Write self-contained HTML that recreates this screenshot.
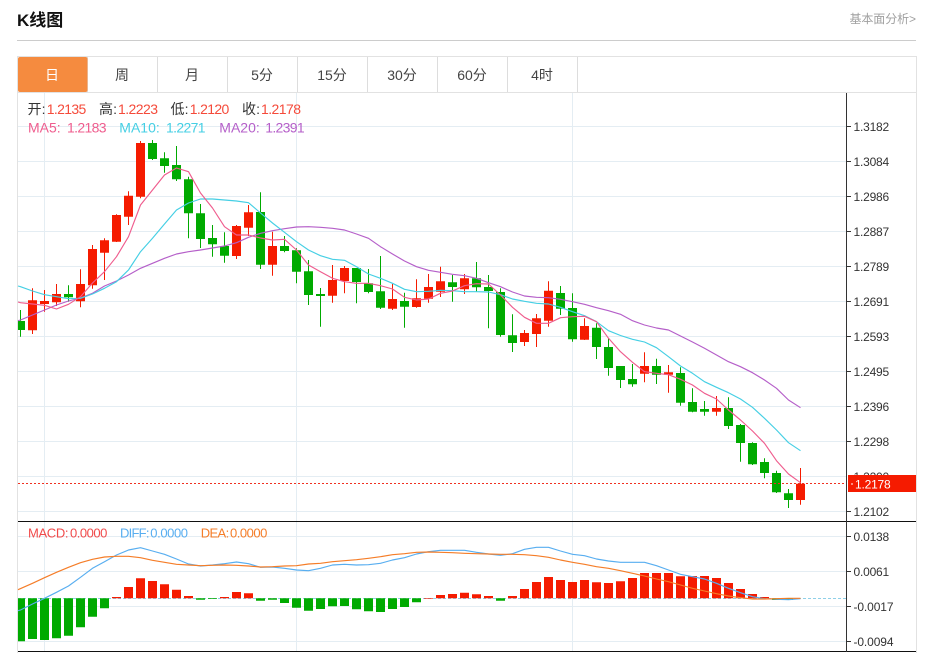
<!DOCTYPE html>
<html lang="zh-CN"><head><meta charset="utf-8"><title>K线图</title>
<style>
html,body{margin:0;padding:0;background:#fff;width:929px;height:653px;overflow:hidden}
svg{display:block;font-family:"Liberation Sans","Noto Sans CJK SC",sans-serif}
</style></head><body>
<svg width="929" height="653" viewBox="0 0 929 653" xmlns="http://www.w3.org/2000/svg">
<rect width="929" height="653" fill="#fff"/>
<text x="17" y="26" font-size="17" font-weight="700" fill="#111">K线图</text>
<text x="849.5" y="23" font-size="12" fill="#a0a0a0" textLength="66.5">基本面分析&gt;</text>
<path d="M17 40.5H916" stroke="#ccc"/>
<path d="M17.5 653V56.5H916.5V653M17 92.5H917" fill="none" stroke="#e2e2e2"/>
<path d="M87.5 57V92M157.5 57V92M227.5 57V92M297.5 57V92M367.5 57V92M437.5 57V92M507.5 57V92M577.5 57V92" stroke="#ddd"/>
<rect x="18" y="57" width="69.5" height="35" rx="2" fill="#f58b3f"/>
<g font-size="14" fill="#444" text-anchor="middle">
<text x="52" y="80" fill="#fff">日</text><text x="122" y="80">周</text><text x="192" y="80">月</text><text x="262" y="80">5分</text><text x="332" y="80">15分</text><text x="402" y="80">30分</text><text x="472" y="80">60分</text><text x="542" y="80">4时</text>
</g>
<path d="M18 126.5H846M18 161.5H846M18 196.5H846M18 231.5H846M18 266.5H846M18 301.5H846M18 336.5H846M18 371.5H846M18 406.5H846M18 441.5H846M18 476.5H846M18 511.5H846M18 536.5H846M18 571.5H846M18 606.5H846M18 641.5H846M44.5 93V651M296.5 93V651M572.5 93V651" stroke="#e4edf3" fill="none"/>
<path d="M20.5 310V336.7M68.5 285.3V301.7M152.5 140V160M164.5 152.3V172.7M176.5 146V181M188.5 176.7V238.3M200.5 204V248M212.5 225V256.7M224.5 232.3V262.7M260.5 192.3V269M284.5 236V252.3M296.5 248.3V283.3M308.5 260V305M320.5 288V326.7M356.5 268V303.3M368.5 269V293.3M380.5 256V309M404.5 292.7V327.7M452.5 275V301.7M476.5 262V291.7M488.5 275V328.3M500.5 288.3V336.7M512.5 314.3V352M560.5 286V315M572.5 293.3V341.7M596.5 323.3V359M608.5 338.3V375.7M620.5 366V388M632.5 364V386.7M656.5 358.7V384M680.5 367.3V405.7M692.5 388.3V412.3M704.5 401V415.7M728.5 397.3V429M740.5 424V461.7M752.5 442.3V465M764.5 458.3V478.3M776.5 470.7V493M788.5 489V508" stroke="#00aa00" fill="none"/>
<path d="M32.5 288.3V334M44.5 290V311.7M56.5 284V306M80.5 269.3V307.3M92.5 245V288.7M104.5 238.3V280M116.5 214.3V242M128.5 191.3V225M140.5 141V198.3M236.5 225V259M248.5 205V236M272.5 231.7V275.7M332.5 265V302.7M344.5 266V293.3M392.5 284V310M416.5 279.3V307.7M428.5 274V302.7M440.5 266.7V297M464.5 274V294M524.5 330V346M536.5 314V347M548.5 281.3V326.7M584.5 318.3V340M644.5 352.3V382.3M668.5 365V392.7M716.5 396V415.7M800.5 468V504.7" stroke="#f51b00" fill="none"/>
<path d="M18 321h7V330h-7zM64 294h9V297.3h-9zM148 143h9V159h-9zM160 158.3h9V166h-9zM172 165h9V179.3h-9zM184 179.3h9V213.3h-9zM196 213.3h9V239h-9zM208 238h9V244.3h-9zM220 246h9V255.7h-9zM256 212h9V264.7h-9zM280 246h9V251h-9zM292 250.3h9V271.7h-9zM304 271.3h9V295h-9zM316 294h9V296h-9zM352 268h9V282h-9zM364 283.3h9V292h-9zM376 291.3h9V307.7h-9zM400 301h9V306.7h-9zM448 282.3h9V287h-9zM472 278.3h9V287.3h-9zM484 287h9V291h-9zM496 292h9V335h-9zM508 335.3h9V343h-9zM556 293h9V308.7h-9zM568 308h9V339.3h-9zM592 327.7h9V347h-9zM604 347h9V368h-9zM616 366h9V380h-9zM628 379h9V384.3h-9zM652 366h9V374.7h-9zM676 373h9V402.7h-9zM688 402h9V411.7h-9zM700 409h9V411.7h-9zM724 408h9V426h-9zM736 425h9V443h-9zM748 443h9V464.3h-9zM760 462h9V473h-9zM772 473h9V492.3h-9zM784 493.3h9V500h-9z" fill="#00aa00"/>
<path d="M28 300.3h9V330.3h-9zM40 301h9V304h-9zM52 294h9V302.3h-9zM76 284h9V301.3h-9zM88 249h9V285.3h-9zM100 240.3h9V252.7h-9zM112 215h9V241.7h-9zM124 195.7h9V216.7h-9zM136 143h9V196.7h-9zM232 226h9V256h-9zM244 212.3h9V227.7h-9zM268 246h9V264.7h-9zM328 280h9V295.7h-9zM340 268h9V281h-9zM388 299h9V308.7h-9zM412 298.3h9V307h-9zM424 287h9V298.7h-9zM436 281.3h9V291.7h-9zM460 278.3h9V289.3h-9zM520 333h9V342h-9zM532 318.3h9V334h-9zM544 290.7h9V320.7h-9zM580 326h9V339.7h-9zM640 366h9V373.7h-9zM664 372.3h9V374.7h-9zM712 408h9V411.7h-9zM796 483.7h9V500h-9z" fill="#f51b00"/>
<g fill="none" stroke-width="1.15" stroke-linejoin="round">
<polyline stroke="#b55fc9" points="18,320.7 20.5,320 32.5,315 44.5,310 56.5,305 68.5,301 80.5,298 92.5,293.3 104.5,286 116.5,281 128.5,275 140.5,268.3 152.5,263.3 164.5,258.3 176.5,254 188.5,251.7 200.5,250 212.5,248 224.5,246 236.5,242.7 248.5,237.3 260.5,233.3 272.5,230.7 284.5,228.7 296.5,227 308.5,226.7 320.5,227.3 332.5,228.3 344.5,230 356.5,234 368.5,238.3 380.5,246.7 392.5,254 404.5,261 416.5,266.7 428.5,270.3 440.5,272.3 452.5,274.3 464.5,275.7 476.5,278.3 488.5,282.7 500.5,286.7 512.5,292 524.5,296 536.5,297.3 548.5,297.7 560.5,299.3 572.5,301.7 584.5,304.3 596.5,307.7 608.5,310.7 620.5,314.3 632.5,320.7 644.5,325 656.5,328 668.5,330 680.5,336 692.5,342 704.5,348.3 716.5,355 728.5,361.7 740.5,366.7 752.5,372.7 764.5,380 776.5,388.3 788.5,400 800.5,407.7"/>
<polyline stroke="#45cfe4" points="18,286 20.5,286.7 32.5,291 44.5,294.7 56.5,296.7 68.5,298.7 80.5,298.3 92.5,294 104.5,288.3 116.5,281.7 128.5,270 140.5,251.7 152.5,238.3 164.5,224 176.5,210 188.5,203 200.5,199 212.5,199 224.5,200 236.5,201 248.5,202.7 260.5,213 272.5,223 284.5,232.3 296.5,241.7 308.5,250 320.5,255.7 332.5,259.3 344.5,260.3 356.5,266.7 368.5,274 380.5,278.3 392.5,283.3 404.5,289.3 416.5,291.7 428.5,291.3 440.5,290.3 452.5,290.7 464.5,291.7 476.5,291.7 488.5,292 500.5,294.7 512.5,299 524.5,301.3 536.5,303.3 548.5,304 560.5,307.3 572.5,311.7 584.5,315.7 596.5,321.7 608.5,330.7 620.5,335.5 632.5,339.3 644.5,342 656.5,347.7 668.5,356.7 680.5,366 692.5,373.3 704.5,381.7 716.5,387.3 728.5,392.7 740.5,399 752.5,407.3 764.5,418.3 776.5,430 788.5,442.7 800.5,450.7"/>
<polyline stroke="#ef5d8e" points="18,302 20.5,302.7 32.5,304 44.5,305.3 56.5,309 68.5,304.3 80.5,296.7 92.5,283 104.5,271.7 116.5,256.7 128.5,236.7 140.5,205 152.5,190 164.5,175 176.5,168 188.5,171.7 200.5,193 212.5,208 224.5,226.7 236.5,235 248.5,235 260.5,238 272.5,240 284.5,239.3 296.5,250 308.5,265 320.5,271.7 332.5,278.3 344.5,281.7 356.5,283.3 368.5,283.3 380.5,285.7 392.5,289 404.5,297.3 416.5,300 428.5,299 440.5,293.3 452.5,291 464.5,285.7 476.5,283.7 488.5,284 500.5,295 512.5,307.3 524.5,317.3 536.5,323.3 548.5,323.3 560.5,317.7 572.5,316.7 584.5,316.3 596.5,321.7 608.5,338.3 620.5,351.7 632.5,362.3 644.5,371.7 656.5,373.3 668.5,374.7 680.5,379.3 692.5,385 704.5,393.3 716.5,399 728.5,410 740.5,420 752.5,431 764.5,443.3 776.5,460.7 788.5,474 800.5,482.7"/>
</g>
<path d="M18 483.5H846" stroke="#f03020" stroke-dasharray="2 2"/>
<g font-size="14">
<text x="27.5" y="114" fill="#333" textLength="18">开:</text><text x="46.7" y="114" fill="#f54a3a" textLength="39.6">1.2135</text>
<text x="99" y="114" fill="#333" textLength="18">高:</text><text x="118" y="114" fill="#f54a3a" textLength="40">1.2223</text>
<text x="170.5" y="114" fill="#333" textLength="18">低:</text><text x="189.7" y="114" fill="#f54a3a" textLength="39.6">1.2120</text>
<text x="242" y="114" fill="#333" textLength="18">收:</text><text x="261" y="114" fill="#f54a3a" textLength="40">1.2178</text>
<text x="28" y="132.5" fill="#ef5d8e">MA5:</text><text x="67" y="132.5" fill="#ef5d8e" textLength="39.5">1.2183</text>
<text x="119.3" y="132.5" fill="#45cfe4">MA10:</text><text x="166" y="132.5" fill="#45cfe4" textLength="39.5">1.2271</text>
<text x="219.3" y="132.5" fill="#b55fc9">MA20:</text><text x="265.2" y="132.5" fill="#b55fc9" textLength="39.5">1.2391</text>
</g>
<g font-size="13">
<text x="28" y="537.5" fill="#f14a4a" textLength="40.5">MACD:</text><text x="70" y="537.5" fill="#f14a4a" textLength="37.3">0.0000</text>
<text x="120" y="537.5" fill="#58aef0" textLength="29.5">DIFF:</text><text x="150.3" y="537.5" fill="#58aef0" textLength="37.7">0.0000</text>
<text x="200.7" y="537.5" fill="#f57d28" textLength="28.5">DEA:</text><text x="230" y="537.5" fill="#f57d28" textLength="37.3">0.0000</text>
</g>
<path d="M18 598.5H846" stroke="#8fd0e8" stroke-dasharray="3 2"/>
<path d="M18 598.3h7V641.3h-7zM28 598.3h9V639h-9zM40 598.3h9V640h-9zM52 598.3h9V638.3h-9zM64 598.3h9V635.7h-9zM76 598.3h9V627.3h-9zM88 598.3h9V616.7h-9zM100 598.3h9V608.3h-9zM196 598.3h9V599.7h-9zM208 598.3h9V599h-9zM256 598.3h9V600.7h-9zM268 598.3h9V599.7h-9zM280 598.3h9V603h-9zM292 598.3h9V607.7h-9zM304 598.3h9V610.7h-9zM316 598.3h9V609h-9zM328 598.3h9V606.3h-9zM340 598.3h9V606h-9zM352 598.3h9V609.3h-9zM364 598.3h9V611.3h-9zM376 598.3h9V612h-9zM388 598.3h9V609h-9zM400 598.3h9V607h-9zM412 598.3h9V602.3h-9zM496 598.3h9V600.7h-9zM772 598.3h9V600h-9zM784 598.3h9V600h-9z" fill="#00aa00"/>
<path d="M112 597h9V598.3h-9zM124 587h9V598.3h-9zM136 578.3h9V598.3h-9zM148 581h9V598.3h-9zM160 584.3h9V598.3h-9zM172 589.7h9V598.3h-9zM184 596h9V598.3h-9zM220 597h9V598.3h-9zM232 592h9V598.3h-9zM244 593.3h9V598.3h-9zM424 598h9V598.6h-9zM436 595h9V598.3h-9zM448 594h9V598.3h-9zM460 592.7h9V598.3h-9zM472 594.3h9V598.3h-9zM484 596h9V598.3h-9zM508 596h9V598.3h-9zM520 589h9V598.3h-9zM532 582h9V598.3h-9zM544 577h9V598.3h-9zM556 580h9V598.3h-9zM568 582h9V598.3h-9zM580 580h9V598.3h-9zM592 582.3h9V598.3h-9zM604 583h9V598.3h-9zM616 581.3h9V598.3h-9zM628 578h9V598.3h-9zM640 573h9V598.3h-9zM652 573h9V598.3h-9zM664 573h9V598.3h-9zM676 576.3h9V598.3h-9zM688 576h9V598.3h-9zM700 576h9V598.3h-9zM712 578h9V598.3h-9zM724 583h9V598.3h-9zM736 589h9V598.3h-9zM748 594h9V598.3h-9zM760 597h9V598.3h-9z" fill="#f51b00"/>
<g fill="none" stroke-width="1.15" stroke-linejoin="round">
<polyline stroke="#58aef0" points="18,610.7 20.5,610 32.5,604 44.5,598.3 56.5,592.3 68.5,586 80.5,577.3 92.5,568.3 104.5,561.7 116.5,555 128.5,550 140.5,547.7 152.5,551 164.5,554.3 176.5,559 188.5,564 200.5,566 212.5,565 224.5,563.7 236.5,562 248.5,563.7 260.5,567.3 272.5,567 284.5,568.3 296.5,570 308.5,570.7 320.5,568.3 332.5,565 344.5,564.3 356.5,565 368.5,564.7 380.5,563.3 392.5,560 404.5,557.7 416.5,554 428.5,551.7 440.5,550.3 452.5,550.3 464.5,550.3 476.5,552.3 488.5,554 500.5,555.3 512.5,553.7 524.5,549.3 536.5,547.3 548.5,547.3 560.5,551 572.5,554.3 584.5,555.7 596.5,559 608.5,561 620.5,562.3 632.5,562.3 644.5,562.3 656.5,565.7 668.5,570 680.5,574.3 692.5,576.7 704.5,579 716.5,583.3 728.5,588.3 740.5,592.7 752.5,596.7 764.5,598.7 776.5,599.3 788.5,599.7 800.5,598.7"/>
<polyline stroke="#f57d28" points="18,589.7 32.5,583.3 44.5,577.7 56.5,572.3 68.5,567.3 80.5,562.7 92.5,559.3 104.5,557 116.5,556.3 128.5,556.3 140.5,557.7 152.5,560.3 164.5,562.3 176.5,564.3 188.5,565 200.5,565.7 212.5,565.3 224.5,565 236.5,565.3 248.5,566 260.5,567 272.5,566.7 284.5,566 296.5,565.7 308.5,564 320.5,563.3 332.5,561.7 344.5,560.7 356.5,559.7 368.5,558.3 380.5,556.7 392.5,554.7 404.5,553.7 416.5,552.3 428.5,552 440.5,552.3 452.5,552.7 464.5,553.3 476.5,553.7 488.5,554 500.5,554.3 512.5,554.3 524.5,554.7 536.5,555.7 548.5,557.3 560.5,560 572.5,562.3 584.5,564.3 596.5,566.7 608.5,568.3 620.5,570.7 632.5,573.3 644.5,576 656.5,579 668.5,581.7 680.5,585 692.5,588.3 704.5,591 716.5,593.7 728.5,596 740.5,597.7 752.5,599 764.5,599 776.5,598.7 788.5,598.3 800.5,598.3"/>
</g>
<path d="M18 521.5H916M18 651.5H916" stroke="#111"/>
<path d="M846.5 93V652" stroke="#333"/>
<path d="M846 126.5h5M846 161.5h5M846 196.5h5M846 231.5h5M846 266.5h5M846 301.5h5M846 336.5h5M846 371.5h5M846 406.5h5M846 441.5h5M846 511.5h5M846 536.5h5M846 571.5h5M846 606.5h5M846 641.5h5" stroke="#333"/>
<g font-size="12" fill="#333">
<text x="853.5" y="131" textLength="35.7">1.3182</text>
<text x="853.5" y="166" textLength="35.7">1.3084</text>
<text x="853.5" y="201" textLength="35.7">1.2986</text>
<text x="853.5" y="236" textLength="35.7">1.2887</text>
<text x="853.5" y="271" textLength="35.7">1.2789</text>
<text x="853.5" y="306" textLength="35.7">1.2691</text>
<text x="853.5" y="341" textLength="35.7">1.2593</text>
<text x="853.5" y="376" textLength="35.7">1.2495</text>
<text x="853.5" y="411" textLength="35.7">1.2396</text>
<text x="853.5" y="446" textLength="35.7">1.2298</text>
<text x="853.5" y="481" textLength="35.7">1.2200</text>
<text x="853.5" y="516" textLength="35.7">1.2102</text>
<text x="853.5" y="541" textLength="35.7">0.0138</text>
<text x="853.5" y="576" textLength="35.7">0.0061</text>
<text x="853.5" y="611" textLength="40">-0.0017</text>
<text x="853.5" y="646" textLength="40">-0.0094</text>
</g>
<rect x="848" y="475" width="68" height="17" fill="#f51b00"/>
<path d="M851 484h2" stroke="#fff"/>
<text x="855" y="488.5" font-size="12" fill="#fff" textLength="35.7">1.2178</text>
</svg>
</body></html>
